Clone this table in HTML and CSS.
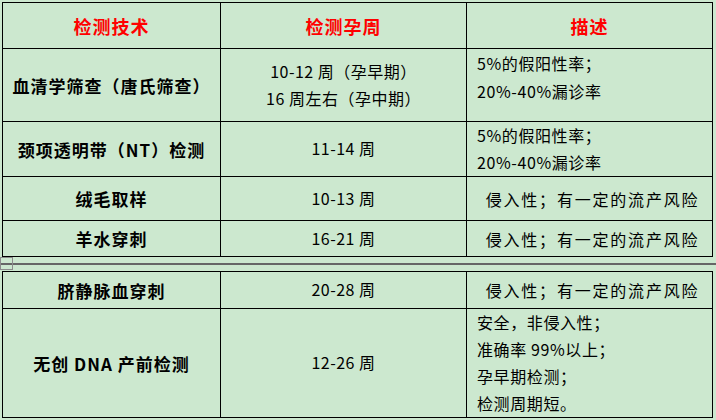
FILE: index.html
```html
<!DOCTYPE html>
<html lang="zh-CN">
<head>
<meta charset="utf-8">
<title>产前检测技术</title>
<link rel="stylesheet" href="styles.css">
</head>
<body>
<div class="page">
  <div class="tbl tbl-a">
    <div class="cell head">检测技术</div>
    <div class="cell head">检测孕周</div>
    <div class="cell head">描述</div>

    <div class="cell name">血清学筛查（唐氏筛查）</div>
    <div class="cell week"><span>10-12 周（孕早期）</span><span>16 周左右（孕中期）</span></div>
    <div class="cell desc top"><span>5%的假阳性率；</span><span>20%-40%漏诊率</span></div>

    <div class="cell name">颈项透明带（NT）检测</div>
    <div class="cell week">11-14 周</div>
    <div class="cell desc"><span>5%的假阳性率；</span><span>20%-40%漏诊率</span></div>

    <div class="cell name">绒毛取样</div>
    <div class="cell week">10-13 周</div>
    <div class="cell risk">侵入性；有一定的流产风险</div>

    <div class="cell name">羊水穿刺</div>
    <div class="cell week">16-21 周</div>
    <div class="cell risk">侵入性；有一定的流产风险</div>
  </div>

  <div class="sep">
    <div class="sep-line"></div>
    <div class="sep-box"></div>
  </div>

  <div class="tbl tbl-b">
    <div class="cell name">脐静脉血穿刺</div>
    <div class="cell week">20-28 周</div>
    <div class="cell risk">侵入性；有一定的流产风险</div>

    <div class="cell name">无创 DNA 产前检测</div>
    <div class="cell week">12-26 周</div>
    <div class="cell desc"><span>安全，非侵入性；</span><span>准确率 99%以上；</span><span>孕早期检测；</span><span>检测周期短。</span></div>
  </div>
</div>
</body>
</html>
```

FILE: styles.css
```css
html, body {
  margin: 0;
  padding: 0;
  background: #cce8cf;
}

body {
  font-family: "Noto Sans CJK SC", "Noto Sans", sans-serif;
  color: #000;
}

.page {
  padding-top: 2px;
  width: 716px;
}

.tbl {
  display: grid;
  grid-template-columns: 217px 245px 245px;
  gap: 1px;
  background: #000;
  border: 1px solid #000;
  width: max-content;
  margin-left: 2px;
}

.tbl-a {
  grid-template-rows: 45px 72px 54px 43px 35px;
}

.tbl-b {
  grid-template-rows: 36px 108px;
}

.cell {
  background: #cce8cf;
  display: flex;
  flex-direction: column;
  justify-content: center;
  align-items: center;
  text-align: center;
  overflow: hidden;
}

.head {
  color: #ff0000;
  font-size: 18px;
  font-weight: 700;
  letter-spacing: 1px;
}

.name {
  font-size: 17px;
  font-weight: 700;
  letter-spacing: 1px;
}

.week {
  font-size: 16px;
  letter-spacing: 0.5px;
  line-height: 27.5px;
}

.desc {
  align-items: flex-start;
  text-align: left;
  padding-left: 10px;
  font-size: 16px;
  letter-spacing: 0.6px;
  line-height: 27px;
}

.desc.top {
  justify-content: flex-start;
  line-height: 28px;
}

.risk {
  font-size: 16px;
  letter-spacing: 1.8px;
  padding-left: 6px;
}

.sep {
  position: relative;
  height: 14px;
  padding-top: 6px;
  box-sizing: border-box;
}

.sep-line {
  height: 2px;
  background: #666;
}

.sep-box {
  position: absolute;
  left: 0;
  top: 0;
  width: 11px;
  height: 11px;
  border: 1px solid #8c8c8c;
}
```
